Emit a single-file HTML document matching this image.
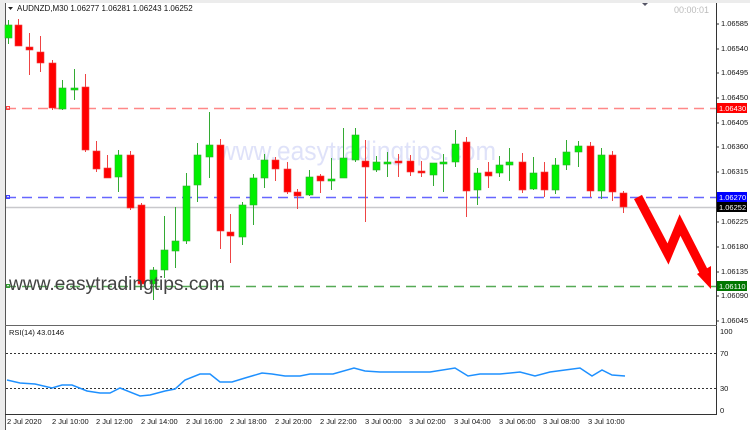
<!DOCTYPE html>
<html><head><meta charset="utf-8"><style>
body{margin:0;width:750px;height:430px;overflow:hidden;background:#fff;font-family:"Liberation Sans",sans-serif}
svg{display:block}
</style></head><body>
<svg id="s" width="750" height="430" xmlns="http://www.w3.org/2000/svg" font-family="Liberation Sans, sans-serif">
<rect x="0" y="0" width="750" height="430" fill="#fff"/>
<rect x="0" y="0" width="5" height="430" fill="#ececec"/>
<rect x="0" y="0" width="750" height="3" fill="#ececec"/>
<line x1="5.5" y1="3" x2="5.5" y2="430" stroke="#555"/>
<line x1="716.5" y1="3" x2="716.5" y2="414" stroke="#333"/>
<line x1="5" y1="325.5" x2="717" y2="325.5" stroke="#666"/>
<line x1="5" y1="414.5" x2="717" y2="414.5" stroke="#333"/>
<text x="218" y="160" font-size="27" fill="#dfe2f9" textLength="278" lengthAdjust="spacingAndGlyphs">www.easytradingtips.com</text>
<line x1="6" y1="108.5" x2="716" y2="108.5" stroke="#f88" stroke-width="1.5" stroke-dasharray="10,6"/>
<line x1="6" y1="197.5" x2="716" y2="197.5" stroke="#66f" stroke-width="1.5" stroke-dasharray="10,6"/>
<line x1="6" y1="207.5" x2="716" y2="207.5" stroke="#c8c8cc" stroke-width="1.5"/>
<line x1="6" y1="286.5" x2="716" y2="286.5" stroke="#5a5" stroke-width="1.5" stroke-dasharray="10,6"/>
<rect x="6.5" y="106.5" width="3" height="3" fill="none" stroke="#f44"/>
<rect x="6.5" y="195.5" width="3" height="3" fill="none" stroke="#44f"/>
<rect x="6.5" y="284.5" width="3" height="3" fill="none" stroke="#393"/>
<g id="c"></g>
<text x="9" y="290" font-size="19" fill="#444" textLength="216" lengthAdjust="spacingAndGlyphs">www.easytradingtips.com</text>
<path d="M8 7 L13 7 L10.5 10 Z" fill="#222"/>
<text x="17" y="11" font-size="8" fill="#111">AUDNZD,M30  1.06277 1.06281 1.06243 1.06252</text>
<text x="674" y="13" font-size="9" fill="#bbb">00:00:01</text>
<path d="M642 3 L648 3 L645 6 Z" fill="#556"/>
<path d="M638 197 L668 254 L680 225 L706 276" fill="none" stroke="#f00" stroke-width="9"/>
<path d="M697 274 L711 266 L711 289 Z" fill="#f00"/>
<g font-size="7.5" fill="#111">
<text x="721" y="26">1.06585</text><text x="721" y="51">1.06540</text><text x="721" y="75">1.06495</text>
<text x="721" y="100">1.06450</text><text x="721" y="125">1.06405</text><text x="721" y="149">1.06360</text>
<text x="721" y="174">1.06315</text><text x="721" y="224">1.06225</text><text x="721" y="249">1.06180</text>
<text x="721" y="274">1.06135</text><text x="721" y="298">1.06090</text><text x="721" y="323">1.06045</text>
</g>
<g stroke="#333"><line x1="716" y1="24" x2="719" y2="24"/><line x1="716" y1="49" x2="719" y2="49"/><line x1="716" y1="73" x2="719" y2="73"/><line x1="716" y1="98" x2="719" y2="98"/><line x1="716" y1="123" x2="719" y2="123"/><line x1="716" y1="147" x2="719" y2="147"/><line x1="716" y1="172" x2="719" y2="172"/><line x1="716" y1="222" x2="719" y2="222"/><line x1="716" y1="247" x2="719" y2="247"/><line x1="716" y1="272" x2="719" y2="272"/><line x1="716" y1="296" x2="719" y2="296"/><line x1="716" y1="321" x2="719" y2="321"/></g>
<rect x="717" y="103" width="30" height="10" fill="#f00"/><text x="719" y="111" font-size="7.5" fill="#fff">1.06430</text>
<rect x="717" y="192" width="30" height="10" fill="#00f"/><text x="719" y="200" font-size="7.5" fill="#fff">1.06270</text>
<rect x="717" y="202" width="30" height="10" fill="#000"/><text x="719" y="210" font-size="7.5" fill="#fff">1.06252</text>
<rect x="717" y="281" width="30" height="10" fill="#070"/><text x="719" y="289" font-size="7.5" fill="#fff">1.06110</text>
<text x="9" y="335" font-size="7.5" fill="#111">RSI(14) 43.0146</text>
<line x1="6" y1="353.5" x2="716" y2="353.5" stroke="#333" stroke-dasharray="2,2"/>
<line x1="6" y1="388.5" x2="716" y2="388.5" stroke="#333" stroke-dasharray="2,2"/>
<g font-size="7.5" fill="#111"><text x="720" y="334">100</text><text x="720" y="356">70</text><text x="720" y="391">30</text><text x="720" y="413">0</text></g>
<polyline fill="none" stroke="#1e90ff" stroke-width="1.5" points="7,380 20,383 35,384 52,388 62,385 72,385 87,391 100,393 110,393 120,388 140,396 150,395 165,391 175,389 185,380 200,374 210,374 220,382 232,382 245,378 262,373 272,374 285,376 300,376 310,374 333,374 354,368 365,371 380,372 400,372 430,372 455,368 468,376 480,374 500,374 520,372 535,376 550,372 565,370 580,368 592,376 602,370 612,375 625,376"/>
<g font-size="7.5" fill="#111">
<text x="7" y="424">2 Jul 2020</text><text x="52" y="424">2 Jul 10:00</text><text x="96" y="424">2 Jul 12:00</text>
<text x="141" y="424">2 Jul 14:00</text><text x="186" y="424">2 Jul 16:00</text><text x="230" y="424">2 Jul 18:00</text>
<text x="275" y="424">2 Jul 20:00</text><text x="320" y="424">2 Jul 22:00</text><text x="365" y="424">3 Jul 00:00</text>
<text x="409" y="424">3 Jul 02:00</text><text x="454" y="424">3 Jul 04:00</text><text x="499" y="424">3 Jul 06:00</text>
<text x="543" y="424">3 Jul 08:00</text><text x="588" y="424">3 Jul 10:00</text>
</g>
</svg>
<script>
var C=[
[8,'g',25,38,20,44],[18,'r',25,46,19,46],[29,'r',47,50,33,75],[40,'r',52,63,36,72],[52,'r',63,108,60,110],[62,'g',88,109,80,110],[74,'g',88,89,69,100],[85,'r',87,150,74,152],
[96,'r',151,169,141,172],[107,'r',168,178,155,178],[118,'g',155,177,150,192],[130,'r',155,208,151,210],[141,'r',205,284,203,286],[153,'g',270,284,267,300],[164,'g',250,270,216,278],[175,'g',241,251,207,268],[186,'g',186,241,173,244],[197,'g',155,185,143,202],[209,'g',145,157,112,178],[220,'r',145,231,139,249],[230,'r',232,236,214,263],[242,'g',205,237,202,245],[253,'g',178,205,174,225],[264,'g',160,178,154,188],[275,'r',160,169,157,181],[287,'r',169,192,162,194],[297,'r',192,196,189,209],[309,'g',177,195,170,196],[320,'r',176,181,174,193],[331,'g',179,181,158,190],[343,'g',158,178,128,178],[355,'g',135,160,128,162],[365,'r',161,167,140,222],[376,'g',162,170,156,172],[387,'g',162,163,152,177],[398,'r',161,163,154,177],[410,'r',161,172,155,176],[421,'r',171,173,161,177],[433,'g',163,175,163,186],[443,'g',162,164,154,192],[455,'g',144,162,130,167],[466,'r',142,191,137,217],[477,'g',173,190,168,205],[488,'r',172,176,162,188],[499,'g',165,173,156,177],[509,'g',162,165,148,181],[522,'r',162,190,153,193],[533,'g',173,189,157,190],[544,'r',172,190,162,197],[555,'g',165,190,158,194],[566,'g',152,165,140,170],[578,'g',146,152,141,167],[590,'r',146,191,142,197],[601,'g',155,191,148,199],[612,'r',155,192,151,201],[623,'r',193,207,191,213]];
var h='';C.forEach(function(c){var x=c[0],fill=c[1]=='g'?'#00f000':'#f00',st=c[1]=='g'?'#3a3':'#e44';
h+='<line x1="'+(x+0.5)+'" y1="'+c[4]+'" x2="'+(x+0.5)+'" y2="'+c[5]+'" stroke="'+st+'"/>';
h+='<rect x="'+(x-3)+'" y="'+c[2]+'" width="7" height="'+Math.max(2,c[3]-c[2])+'" fill="'+fill+'" stroke="'+st+'" stroke-width="0.6"/>';});
document.getElementById('c').innerHTML=h;
</script>
</body></html>
